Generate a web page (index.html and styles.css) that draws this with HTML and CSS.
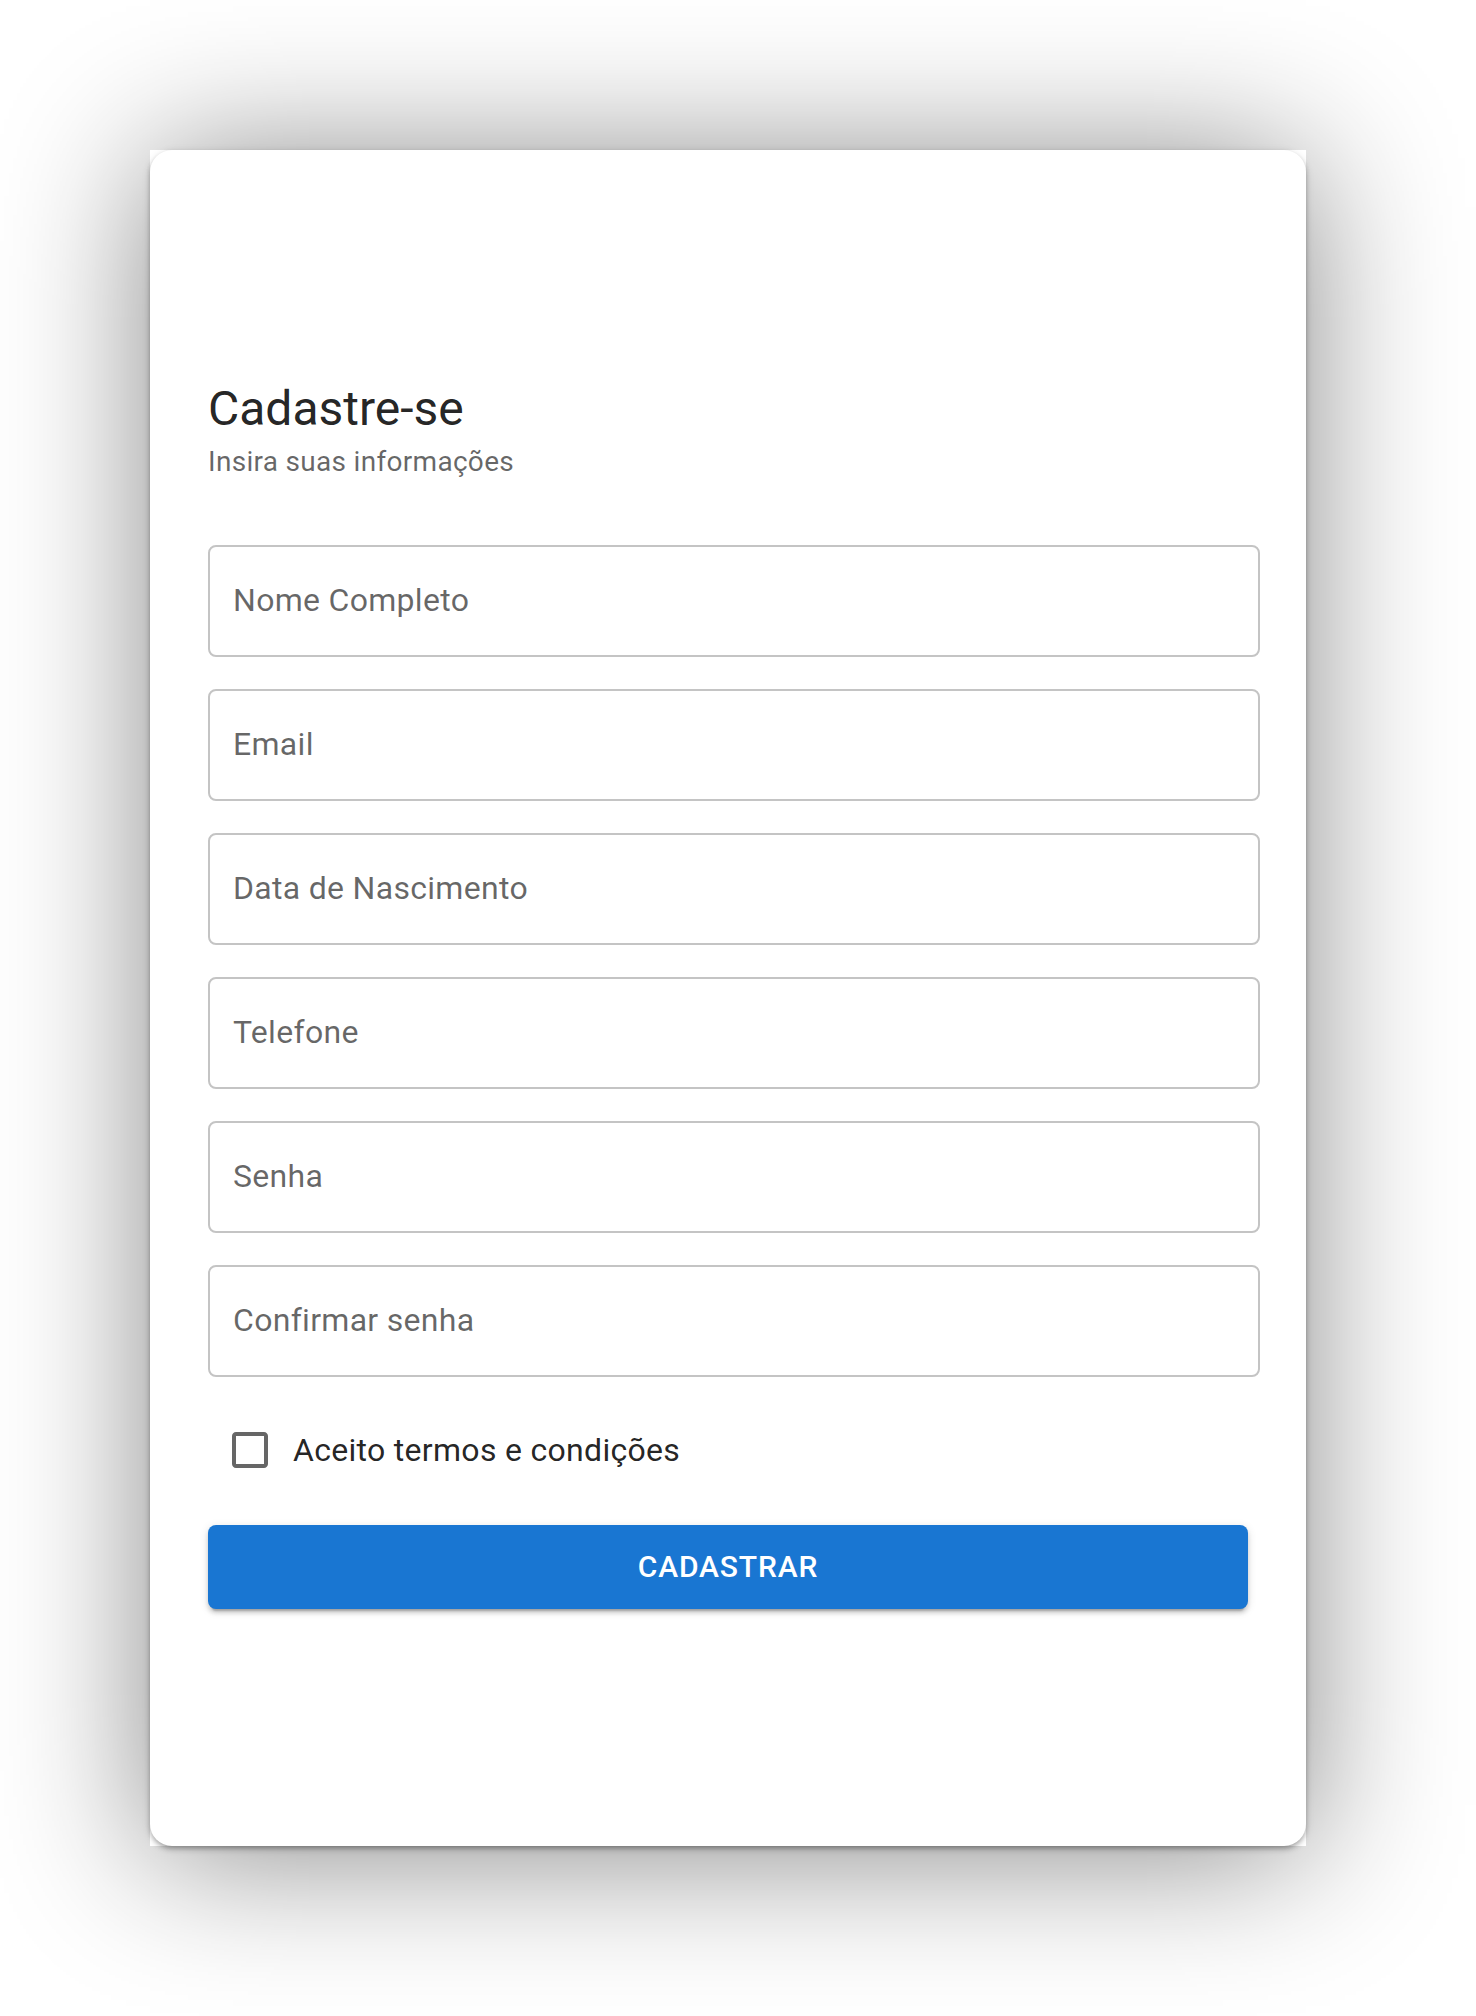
FILE: index.html
```html
<!DOCTYPE html>
<html lang="pt-BR">
<head>
<meta charset="utf-8">
<title>Cadastre-se</title>
<link rel="stylesheet" href="styles.css">
</head>
<body>
<div class="frame">
  <div class="card">
    <h1 class="title">Cadastre-se</h1>
    <p class="subtitle">Insira suas informações</p>
    <div class="fields">
      <div class="field"><span class="label">Nome Completo</span></div>
      <div class="field"><span class="label">Email</span></div>
      <div class="field"><span class="label">Data de Nascimento</span></div>
      <div class="field"><span class="label">Telefone</span></div>
      <div class="field"><span class="label">Senha</span></div>
      <div class="field"><span class="label">Confirmar senha</span></div>
    </div>
    <label class="check-row">
      <svg class="check-icon" viewBox="0 0 24 24" width="48" height="48" aria-hidden="true">
        <path d="M19 5v14H5V5h14m0-2H5c-1.11 0-2 .9-2 2v14c0 1.1.89 2 2 2h14c1.1 0 2-.9 2-2V5c0-1.1-.9-2-2-2z"/>
      </svg>
      <span class="check-label">Aceito termos e condições</span>
    </label>
    <button class="submit" type="button">CADASTRAR</button>
  </div>
</div>
</body>
</html>
```

FILE: styles.css
```css
html, body {
  margin: 0;
  padding: 0;
  background: #ffffff;
}

body {
  font-family: Roboto, "Liberation Sans", Arial, sans-serif;
  padding: 150px 0 0 150px;
  min-height: 2016px;
  box-sizing: border-box;
}

.frame {
  width: 1156px;
  height: 1696px;
  background: #ffffff;
  box-shadow: 0 8px 140px rgba(0, 0, 0, 0.48);
}

.card {
  box-sizing: border-box;
  height: 100%;
  background: #ffffff;
  border-radius: 22px;
  box-shadow: 0 4px 6px -2px rgba(0, 0, 0, 0.22), 0 2px 4px 0 rgba(0, 0, 0, 0.14), 0 2px 8px 0 rgba(0, 0, 0, 0.12);
  padding: 227px 46px 0 58px;
  display: flex;
  flex-direction: column;
}

.title {
  margin: 0;
  font-size: 48px;
  font-weight: 400;
  line-height: 64px;
  color: rgba(0, 0, 0, 0.87);
}

.subtitle {
  margin: 1px 0 0;
  font-size: 28px;
  line-height: 40px;
  letter-spacing: 0.3px;
  color: rgba(0, 0, 0, 0.6);
}

.fields {
  margin-top: 63px;
  display: flex;
  flex-direction: column;
  gap: 32px;
}

.field {
  box-sizing: border-box;
  height: 112px;
  border: 2px solid #c4c4c4;
  border-radius: 8px;
  display: flex;
  align-items: center;
  padding: 0 0 2px 23px;
}

.label {
  font-size: 32px;
  letter-spacing: 0.3px;
  color: rgba(0, 0, 0, 0.6);
}

.check-row {
  margin-top: 49px;
  height: 48px;
  display: flex;
  align-items: center;
  padding-left: 18px;
  gap: 19px;
}

.check-icon {
  fill: rgba(0, 0, 0, 0.6);
  flex: none;
}

.check-label {
  font-size: 32px;
  letter-spacing: 0.3px;
  color: rgba(0, 0, 0, 0.87);
}

.submit {
  margin-top: 51px;
  width: 1040px;
  height: 84px;
  border: 0;
  border-radius: 8px;
  background: #1976d2;
  color: #ffffff;
  font-family: Roboto, "Liberation Sans", Arial, sans-serif;
  font-size: 30px;
  font-weight: 500;
  letter-spacing: 0.86px;
  box-shadow: 0 6px 2px -4px rgba(0, 0, 0, 0.2), 0 4px 4px 0 rgba(0, 0, 0, 0.14), 0 2px 10px 0 rgba(0, 0, 0, 0.12);
  padding: 0 0 2px;
}
```
